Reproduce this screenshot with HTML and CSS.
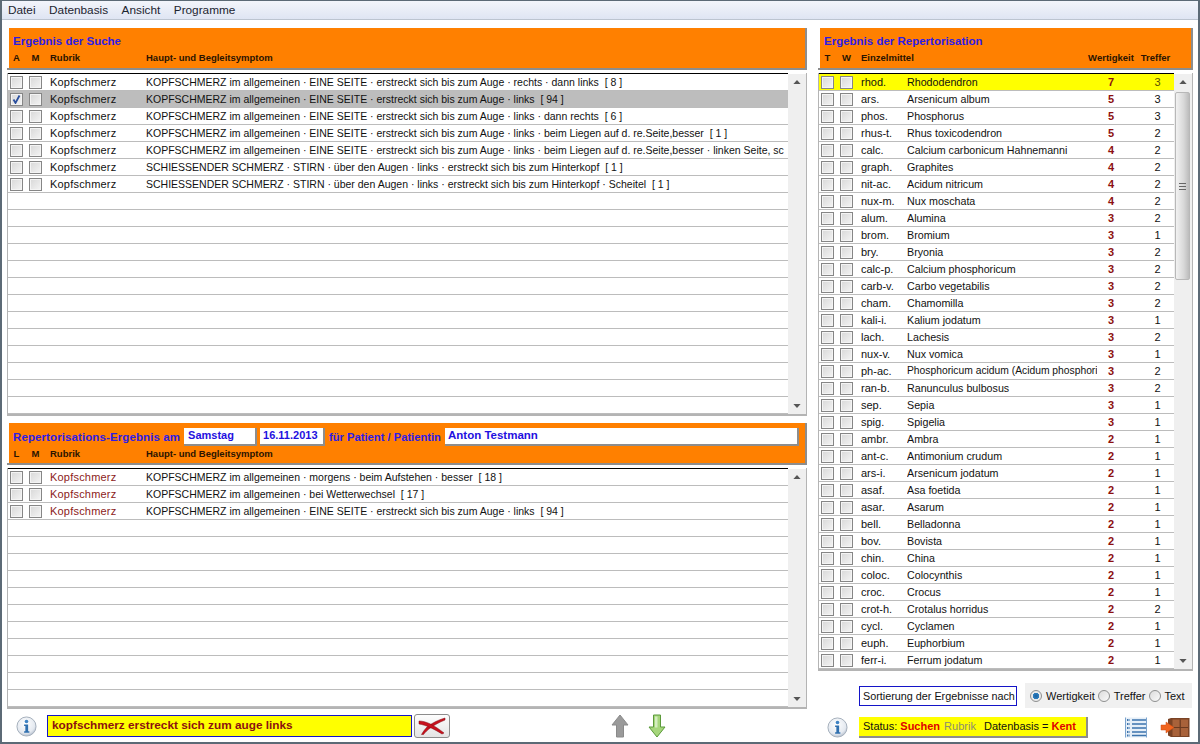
FILE: index.html
```html
<!DOCTYPE html>
<html lang="de">
  <head>
    <meta charset="UTF-8" />
    <title>Repertorisation</title>
    <link rel="stylesheet" href="styles.css">
  </head>
  <body>
    <div class="window">
      <div class="menubar">
        <span>Datei</span>
        <span>Datenbasis</span>
        <span>Ansicht</span>
        <span>Programme</span>
      </div>

      <div class="main">
        <div class="column-left">
          <div class="panel-header">
            <div class="panel-title">Ergebnis der Suche</div>
            <div class="head-row symptom-cols">
              <span class="c">A</span><span class="c">M</span><span>Rubrik</span><span>Haupt- und Begleitsymptom</span>
            </div>
          </div>
          <div class="list list-search">
            <div class="rows">
              <div class="row symptom-cols"><span class="cb"></span><span class="cb"></span><span class="rubric">Kopfschmerz</span><span class="clip">KOPFSCHMERZ im allgemeinen · EINE SEITE · erstreckt sich bis zum Auge · rechts · dann links&nbsp; [ 8 ]</span></div>
              <div class="row symptom-cols selected"><span class="cb">
                <svg width="11" height="11" viewBox="0 0 11 11"><path d="M2.5 5.5 L4.5 9 L8.5 1.5" fill="none" stroke="#2a4f9e" stroke-width="1.8"/></svg>
              </span><span class="cb"></span><span class="rubric">Kopfschmerz</span><span class="clip">KOPFSCHMERZ im allgemeinen · EINE SEITE · erstreckt sich bis zum Auge · links&nbsp; [ 94 ]</span></div>
              <div class="row symptom-cols"><span class="cb"></span><span class="cb"></span><span class="rubric">Kopfschmerz</span><span class="clip">KOPFSCHMERZ im allgemeinen · EINE SEITE · erstreckt sich bis zum Auge · links · dann rechts&nbsp; [ 6 ]</span></div>
              <div class="row symptom-cols"><span class="cb"></span><span class="cb"></span><span class="rubric">Kopfschmerz</span><span class="clip">KOPFSCHMERZ im allgemeinen · EINE SEITE · erstreckt sich bis zum Auge · links · beim Liegen auf d. re.Seite,besser&nbsp; [ 1 ]</span></div>
              <div class="row symptom-cols"><span class="cb"></span><span class="cb"></span><span class="rubric">Kopfschmerz</span><span class="clip">KOPFSCHMERZ im allgemeinen · EINE SEITE · erstreckt sich bis zum Auge · links · beim Liegen auf d. re.Seite,besser · linken Seite, sc</span></div>
              <div class="row symptom-cols"><span class="cb"></span><span class="cb"></span><span class="rubric">Kopfschmerz</span><span class="clip">SCHIESSENDER SCHMERZ · STIRN · über den Augen · links · erstreckt sich bis zum Hinterkopf&nbsp; [ 1 ]</span></div>
              <div class="row symptom-cols"><span class="cb"></span><span class="cb"></span><span class="rubric">Kopfschmerz</span><span class="clip">SCHIESSENDER SCHMERZ · STIRN · über den Augen · links · erstreckt sich bis zum Hinterkopf · Scheitel&nbsp; [ 1 ]</span></div>
            </div>
            <div class="scrollbar">
              <svg class="arrow" width="8" height="4" viewBox="0 0 9 5"><path d="M4.5 0 L9 5 H0 Z" fill="#555"/></svg>
              <svg class="arrow" width="8" height="4" viewBox="0 0 9 5"><path d="M0 0 H9 L4.5 5 Z" fill="#555"/></svg>
            </div>
          </div>

          <div class="panel-header panel-header-lower">
            <div class="title-line">
              <span class="panel-title panel-title-wide">Repertorisations-Ergebnis am</span>
              <span class="field field-day">Samstag</span>
              <span class="field field-date">16.11.2013</span>
              <span class="panel-title panel-title-patient">für Patient / Patientin</span>
              <span class="field field-name">Anton Testmann</span>
            </div>
            <div class="head-row symptom-cols">
              <span class="c">L</span><span class="c">M</span><span>Rubrik</span><span>Haupt- und Begleitsymptom</span>
            </div>
          </div>
          <div class="list list-result">
            <div class="rows">
              <div class="row symptom-cols"><span class="cb"></span><span class="cb"></span><span class="rubric rubric-red">Kopfschmerz</span><span class="clip">KOPFSCHMERZ im allgemeinen · morgens · beim Aufstehen · besser&nbsp; [ 18 ]</span></div>
              <div class="row symptom-cols"><span class="cb"></span><span class="cb"></span><span class="rubric rubric-red">Kopfschmerz</span><span class="clip">KOPFSCHMERZ im allgemeinen · bei Wetterwechsel&nbsp; [ 17 ]</span></div>
              <div class="row symptom-cols"><span class="cb"></span><span class="cb"></span><span class="rubric rubric-red">Kopfschmerz</span><span class="clip">KOPFSCHMERZ im allgemeinen · EINE SEITE · erstreckt sich bis zum Auge · links&nbsp; [ 94 ]</span></div>
            </div>
            <div class="scrollbar">
              <svg class="arrow" width="8" height="4" viewBox="0 0 9 5"><path d="M4.5 0 L9 5 H0 Z" fill="#555"/></svg>
              <svg class="arrow" width="8" height="4" viewBox="0 0 9 5"><path d="M0 0 H9 L4.5 5 Z" fill="#555"/></svg>
            </div>
          </div>

          <div class="toolbar toolbar-left">
            <svg class="icon-info" width="21" height="21" viewBox="0 0 22 22">
              <defs>
                <radialGradient id="infoBg" cx="45%" cy="35%" r="70%"><stop offset="0" stop-color="#fff"/><stop offset="0.7" stop-color="#e4e9f0"/><stop offset="1" stop-color="#a9b4c4"/></radialGradient>
              </defs>
              <circle cx="11" cy="11" r="10" fill="url(#infoBg)" stroke="#a3adba"/>
              <circle cx="11" cy="5.8" r="1.9" fill="#3f83c4"/>
              <path d="M8.5 9 H12.7 V16 H14 V17.5 H8.5 V16 H9.8 V10.5 H8.5 Z" fill="#2f6fae"/>
            </svg>
            <div class="search-input">kopfschmerz erstreckt sich zum auge links</div>
            <div class="cancel-btn">
              <svg width="28" height="18" viewBox="0 0 28 18">
                <path d="M27 1 C20 3 14 6 9 10 C7 12 5 15 3.5 17.5 L5.5 17.5 C9 13 15 8 27 3 Z" fill="#c8101c" stroke="#7e0b12" stroke-width="0.5"/>
                <path d="M1 4 C8 4 16 8 26 16 L24 17 C16 12 8 8 1 7 Z" fill="#c8101c" stroke="#7e0b12" stroke-width="0.5"/>
              </svg>
            </div>
            <div class="move-arrows">
              <svg width="18" height="24" viewBox="0 0 18 24"><path d="M9 1 L17 11 H12.5 V23 H5.5 V11 H1 Z" fill="#9a9a9a" stroke="#8a8a8a"/></svg>
              <svg width="18" height="24" viewBox="0 0 18 24"><path d="M5.5 1 H12.5 V13 H17 L9 23 L1 13 H5.5 Z" fill="#a6d67c" stroke="#5b9a3a"/><rect x="7" y="2.5" width="2.5" height="11" fill="#d4edc0"/></svg>
            </div>
          </div>
        </div>

        <div class="column-right">
          <div class="panel-header">
            <div class="panel-title">Ergebnis der Repertorisation</div>
            <div class="head-row remedy-cols">
              <span class="c">T</span><span class="c">W</span><span>Einzelmittel</span><span class="num">Wertigkeit</span><span class="num">Treffer</span>
            </div>
          </div>
          <div class="list list-remedies">
            <div class="rows">
              <div class="row remedy-cols highlight"><span class="cb"></span><span class="cb"></span><span>rhod.</span><span class="clip">Rhododendron</span><span class="num grade">7</span><span class="hits">3</span></div>
              <div class="row remedy-cols"><span class="cb"></span><span class="cb"></span><span>ars.</span><span class="clip">Arsenicum album</span><span class="num grade">5</span><span class="hits">3</span></div>
              <div class="row remedy-cols"><span class="cb"></span><span class="cb"></span><span>phos.</span><span class="clip">Phosphorus</span><span class="num grade">5</span><span class="hits">3</span></div>
              <div class="row remedy-cols"><span class="cb"></span><span class="cb"></span><span>rhus-t.</span><span class="clip">Rhus toxicodendron</span><span class="num grade">5</span><span class="hits">2</span></div>
              <div class="row remedy-cols"><span class="cb"></span><span class="cb"></span><span>calc.</span><span class="clip">Calcium carbonicum Hahnemanni</span><span class="num grade">4</span><span class="hits">2</span></div>
              <div class="row remedy-cols"><span class="cb"></span><span class="cb"></span><span>graph.</span><span class="clip">Graphites</span><span class="num grade">4</span><span class="hits">2</span></div>
              <div class="row remedy-cols"><span class="cb"></span><span class="cb"></span><span>nit-ac.</span><span class="clip">Acidum nitricum</span><span class="num grade">4</span><span class="hits">2</span></div>
              <div class="row remedy-cols"><span class="cb"></span><span class="cb"></span><span>nux-m.</span><span class="clip">Nux moschata</span><span class="num grade">4</span><span class="hits">2</span></div>
              <div class="row remedy-cols"><span class="cb"></span><span class="cb"></span><span>alum.</span><span class="clip">Alumina</span><span class="num grade">3</span><span class="hits">2</span></div>
              <div class="row remedy-cols"><span class="cb"></span><span class="cb"></span><span>brom.</span><span class="clip">Bromium</span><span class="num grade">3</span><span class="hits">1</span></div>
              <div class="row remedy-cols"><span class="cb"></span><span class="cb"></span><span>bry.</span><span class="clip">Bryonia</span><span class="num grade">3</span><span class="hits">2</span></div>
              <div class="row remedy-cols"><span class="cb"></span><span class="cb"></span><span>calc-p.</span><span class="clip">Calcium phosphoricum</span><span class="num grade">3</span><span class="hits">2</span></div>
              <div class="row remedy-cols"><span class="cb"></span><span class="cb"></span><span>carb-v.</span><span class="clip">Carbo vegetabilis</span><span class="num grade">3</span><span class="hits">2</span></div>
              <div class="row remedy-cols"><span class="cb"></span><span class="cb"></span><span>cham.</span><span class="clip">Chamomilla</span><span class="num grade">3</span><span class="hits">2</span></div>
              <div class="row remedy-cols"><span class="cb"></span><span class="cb"></span><span>kali-i.</span><span class="clip">Kalium jodatum</span><span class="num grade">3</span><span class="hits">1</span></div>
              <div class="row remedy-cols"><span class="cb"></span><span class="cb"></span><span>lach.</span><span class="clip">Lachesis</span><span class="num grade">3</span><span class="hits">2</span></div>
              <div class="row remedy-cols"><span class="cb"></span><span class="cb"></span><span>nux-v.</span><span class="clip">Nux vomica</span><span class="num grade">3</span><span class="hits">1</span></div>
              <div class="row remedy-cols"><span class="cb"></span><span class="cb"></span><span>ph-ac.</span><span class="clip clip-long">Phosphoricum acidum (Acidum phosphori</span><span class="num grade">3</span><span class="hits">2</span></div>
              <div class="row remedy-cols"><span class="cb"></span><span class="cb"></span><span>ran-b.</span><span class="clip">Ranunculus bulbosus</span><span class="num grade">3</span><span class="hits">2</span></div>
              <div class="row remedy-cols"><span class="cb"></span><span class="cb"></span><span>sep.</span><span class="clip">Sepia</span><span class="num grade">3</span><span class="hits">1</span></div>
              <div class="row remedy-cols"><span class="cb"></span><span class="cb"></span><span>spig.</span><span class="clip">Spigelia</span><span class="num grade">3</span><span class="hits">1</span></div>
              <div class="row remedy-cols"><span class="cb"></span><span class="cb"></span><span>ambr.</span><span class="clip">Ambra</span><span class="num grade">2</span><span class="hits">1</span></div>
              <div class="row remedy-cols"><span class="cb"></span><span class="cb"></span><span>ant-c.</span><span class="clip">Antimonium crudum</span><span class="num grade">2</span><span class="hits">1</span></div>
              <div class="row remedy-cols"><span class="cb"></span><span class="cb"></span><span>ars-i.</span><span class="clip">Arsenicum jodatum</span><span class="num grade">2</span><span class="hits">1</span></div>
              <div class="row remedy-cols"><span class="cb"></span><span class="cb"></span><span>asaf.</span><span class="clip">Asa foetida</span><span class="num grade">2</span><span class="hits">1</span></div>
              <div class="row remedy-cols"><span class="cb"></span><span class="cb"></span><span>asar.</span><span class="clip">Asarum</span><span class="num grade">2</span><span class="hits">1</span></div>
              <div class="row remedy-cols"><span class="cb"></span><span class="cb"></span><span>bell.</span><span class="clip">Belladonna</span><span class="num grade">2</span><span class="hits">1</span></div>
              <div class="row remedy-cols"><span class="cb"></span><span class="cb"></span><span>bov.</span><span class="clip">Bovista</span><span class="num grade">2</span><span class="hits">1</span></div>
              <div class="row remedy-cols"><span class="cb"></span><span class="cb"></span><span>chin.</span><span class="clip">China</span><span class="num grade">2</span><span class="hits">1</span></div>
              <div class="row remedy-cols"><span class="cb"></span><span class="cb"></span><span>coloc.</span><span class="clip">Colocynthis</span><span class="num grade">2</span><span class="hits">1</span></div>
              <div class="row remedy-cols"><span class="cb"></span><span class="cb"></span><span>croc.</span><span class="clip">Crocus</span><span class="num grade">2</span><span class="hits">1</span></div>
              <div class="row remedy-cols"><span class="cb"></span><span class="cb"></span><span>crot-h.</span><span class="clip">Crotalus horridus</span><span class="num grade">2</span><span class="hits">2</span></div>
              <div class="row remedy-cols"><span class="cb"></span><span class="cb"></span><span>cycl.</span><span class="clip">Cyclamen</span><span class="num grade">2</span><span class="hits">1</span></div>
              <div class="row remedy-cols"><span class="cb"></span><span class="cb"></span><span>euph.</span><span class="clip">Euphorbium</span><span class="num grade">2</span><span class="hits">1</span></div>
              <div class="row remedy-cols"><span class="cb"></span><span class="cb"></span><span>ferr-i.</span><span class="clip">Ferrum jodatum</span><span class="num grade">2</span><span class="hits">1</span></div>
            </div>
            <div class="scrollbar scrollbar-thumbed">
              <svg class="arrow" width="8" height="4" viewBox="0 0 9 5"><path d="M4.5 0 L9 5 H0 Z" fill="#555"/></svg>
              <div class="thumb"><span class="grip"></span></div>
              <svg class="arrow" width="8" height="4" viewBox="0 0 9 5"><path d="M0 0 H9 L4.5 5 Z" fill="#555"/></svg>
            </div>
          </div>

          <div class="sort-line">
            <div class="sort-label">Sortierung der Ergebnisse nach</div>
            <div class="radio-group">
              <span class="radio radio-on"></span><span class="radio-text">Wertigkeit</span>
              <span class="radio"></span><span class="radio-text">Treffer</span>
              <span class="radio"></span><span class="radio-text">Text</span>
            </div>
          </div>

          <div class="toolbar toolbar-right">
            <svg class="icon-info" width="21" height="21" viewBox="0 0 22 22">
              <circle cx="11" cy="11" r="10" fill="url(#infoBg)" stroke="#a3adba"/>
              <circle cx="11" cy="5.8" r="1.9" fill="#3f83c4"/>
              <path d="M8.5 9 H12.7 V16 H14 V17.5 H8.5 V16 H9.8 V10.5 H8.5 Z" fill="#2f6fae"/>
            </svg>
            <div class="status-box">
              Status: <b class="red">Suchen</b> <span class="grey">Rubrik</span> <span class="db-label">Datenbasis = <b class="red">Kent</b></span>
            </div>
            <svg class="icon-list" width="22" height="21" viewBox="0 0 22 21">
              <rect x="0.5" y="0.5" width="21" height="20" fill="#e6eff8"/>
              <path d="M0.5 0.5 V20.5 M21.5 0.5 V20.5" stroke="#7ba3cd"/>
              <path d="M7 3 H21 M7 7 H21 M7 11 H21 M7 15 H21 M7 18.5 H21" stroke="#3d74ad" stroke-width="1.5"/>
              <path d="M2 3 H5 M2 7 H5 M2 11 H5 M2 15 H5 M2 18.5 H5" stroke="#3d74ad" stroke-width="2" stroke-dasharray="1.5 1"/>
            </svg>
            <svg class="icon-door" width="30" height="21" viewBox="0 0 30 21">
              <path d="M8 2 L11 1 H29.5 V20 H11 L8 18.5 Z" fill="#7a4325"/>
              <rect x="12.5" y="2.5" width="15.5" height="16.5" fill="#a8623a"/>
              <path d="M20.2 2.5 V19 M12.5 10.5 H28" stroke="#6a3a20" stroke-width="1.2"/>
              <path d="M1 8 H6 V5 L14 10.5 L6 16 V13 H1 Z" fill="#f0641e" stroke="#d04a10" stroke-width="0.5"/>
            </svg>
          </div>
        </div>
      </div>
    </div>
  </body>
</html>
```

FILE: styles.css
```css
html, body {
  margin: 0;
  padding: 0;
  background-color: white;
}

body {
  width: 1200px;
  height: 744px;
  overflow: hidden;
  font-family: "Liberation Sans", Arial, sans-serif;
  font-size: 11px;
  color: #111;
}

.window {
  box-sizing: border-box;
  width: 1200px;
  height: 744px;
  border: 1px solid #5c6a76;
  border-width: 1px 2px 2px 2px;
  display: flex;
  flex-direction: column;
}

.menubar {
  height: 18px;
  display: flex;
  align-items: center;
  gap: 13.5px;
  padding-left: 6px;
  font-size: 11.8px;
  color: #1c2430;
  background: linear-gradient(#f3f5fb, #dfe5f3);
  border-bottom: 1px solid #bcc4d0;
}

.main {
  display: flex;
  gap: 11px;
  padding: 8px 5px 0 5px;
  flex: 1;
}

.column-left {
  width: 800px;
  display: flex;
  flex-direction: column;
}

.column-right {
  width: 375px;
  display: flex;
  flex-direction: column;
}

/* orange headers */
.panel-header {
  box-sizing: border-box;
  height: 42px;
  padding: 5px 0 0 6px;
  background: linear-gradient(#ff8000, #ff8000) no-repeat 2px 0 / calc(100% - 2px) 100%;
  border-right: 2px solid #8d8d8d;
  border-bottom: 2px solid #8d8d8d;
}

.panel-title {
  font-size: 11.5px;
  font-weight: bold;
  line-height: 16px;
  color: #2d1ce6;
}

.panel-title-wide {
  letter-spacing: 0.1px;
}

.panel-title-patient {
  margin-left: 4px;
  font-size: 11.2px;
}

.head-row {
  margin-left: -5px;
  margin-top: 3px;
  font-size: 9.5px;
  font-weight: bold;
  line-height: 12px;
  color: #2b1400;
}

.head-row .c {
  width: 13px;
  text-align: center;
}

.panel-header-lower {
  margin-top: 7px;
  padding-top: 4px;
}

.title-line {
  display: flex;
  align-items: center;
  height: 19px;
}

.field {
  box-sizing: border-box;
  height: 18px;
  line-height: 14px;
  padding-left: 4px;
  font-size: 11px;
  font-weight: bold;
  color: #1f10e0;
  background: white;
  border-right: 2px solid #8d8d8d;
  border-bottom: 2px solid #8d8d8d;
}

.field-day {
  width: 73px;
  margin-left: 4px;
}

.field-date {
  width: 65px;
  margin-left: 3px;
  padding-left: 3px;
}

.field-name {
  width: 354px;
  margin-left: auto;
  margin-right: 6px;
  padding-left: 3px;
  font-size: 11.5px;
}

.panel-header-lower .head-row {
  margin-top: 2px;
}

/* lists */
.list {
  display: flex;
  box-sizing: border-box;
  margin-top: 3px;
  border: 1px solid #b4b4b4;
  border-top: none;
  border-bottom-width: 2px;
  background: white;
}

.list-search {
  height: 343px;
}

.list-result {
  height: 241px;
}

.list-remedies {
  height: 598px;
}

.rows {
  flex: 1;
  min-width: 0;
  border-top: 1px solid black;
  background: repeating-linear-gradient(white 0, white 16px, #bcbcbc 16px, #bcbcbc 17px);
}

.row {
  height: 17px;
  box-sizing: border-box;
  border-bottom: 1px solid #bcbcbc;
  line-height: 16px;
  background: white;
}

.symptom-cols {
  display: grid;
  grid-template-columns: 19px 21px 96px 1fr;
  padding-left: 2px;
}

.symptom-cols .clip {
  font-size: 10.5px;
}

.remedy-cols {
  display: grid;
  grid-template-columns: 19px 21px 46px 190px 28px 49px;
  padding-left: 2px;
}

.remedy-cols .clip {
  font-size: 10.7px;
}

.remedy-cols .clip-long {
  font-size: 10.3px;
}

.head-row.remedy-cols {
  grid-template-columns: 19px 21px 226px 48px 41px;
}

.clip {
  overflow: hidden;
  white-space: nowrap;
}

.num {
  text-align: center;
}

.hits {
  padding-left: 16px;
  width: 33px;
  text-align: center;
}

.grade {
  font-weight: bold;
  color: #8c1010;
}

.rubric {
  letter-spacing: 0.2px;
}

.rubric-red {
  color: #8c1a1a;
}

.selected {
  background: #bdbdbd;
}

.highlight {
  background: #ffff00;
}

.highlight .hits {
  color: #5a5000;
}

.cb {
  box-sizing: border-box;
  width: 13px;
  height: 13px;
  margin-top: 2px;
  border: 1px solid #868686;
  background: linear-gradient(135deg, #d8d8d8, #f4f4f4);
  outline: 1px solid #f4f4f4;
  outline-offset: -2px;
  display: block;
}

.cb svg {
  display: block;
}

/* scrollbar */
.scrollbar {
  width: 18px;
  flex: none;
  margin-top: 1px;
  background: #efefef;
  display: flex;
  flex-direction: column;
  justify-content: space-between;
  align-items: center;
  padding: 6px 0;
  box-sizing: border-box;
}

.arrow {
  display: block;
  flex: none;
}

.scrollbar-thumbed {
  position: relative;
}

.thumb {
  position: absolute;
  left: 1px;
  top: 18px;
  width: 15px;
  height: 188px;
  box-sizing: border-box;
  border: 1px solid #b8b8b8;
  border-radius: 2px;
  background: linear-gradient(90deg, #f2f2f2, #d8d8d8 60%, #bcbcbc);
  display: flex;
  align-items: center;
  justify-content: center;
}

.grip {
  width: 7px;
  height: 7px;
  background: repeating-linear-gradient(#666 0, #666 1px, transparent 1px, transparent 3px);
}

/* bottom bars */
.toolbar {
  display: flex;
  align-items: center;
  height: 30px;
  padding-top: 2px;
}

.icon-info {
  margin-left: 9px;
  flex: none;
}

.search-input {
  box-sizing: border-box;
  width: 365px;
  height: 22px;
  margin-left: 10px;
  padding-left: 4px;
  line-height: 19px;
  font-size: 11.8px;
  font-weight: bold;
  color: #8c1010;
  background: #ffff00;
  border: 1px solid #1414c8;
}

.cancel-btn {
  box-sizing: border-box;
  width: 36px;
  height: 24px;
  margin-left: 2px;
  border: 1px solid #8c8c8c;
  border-radius: 3px;
  background: linear-gradient(#fdfdfd, #e4e4e4);
  display: flex;
  align-items: center;
  justify-content: center;
}

.move-arrows {
  display: flex;
  gap: 19px;
  margin-left: 161px;
}

.sort-line {
  box-sizing: border-box;
  display: flex;
  align-items: center;
  height: 39px;
  padding-top: 10px;
}

.sort-label {
  box-sizing: border-box;
  width: 158px;
  height: 20px;
  margin-left: 41px;
  padding-left: 3px;
  line-height: 18px;
  font-size: 10.8px;
  white-space: nowrap;
  border: 1px solid #1414c8;
}

.radio-group {
  display: flex;
  align-items: center;
  width: 167px;
  height: 25px;
  margin-left: 8px;
  padding-left: 5px;
  box-sizing: border-box;
  background: #f0f0f0;
}

.radio {
  box-sizing: border-box;
  width: 12px;
  height: 12px;
  border-radius: 50%;
  border: 1px solid #8e8f8f;
  background: linear-gradient(135deg, #dcdcdc, #fafafa);
  flex: none;
}

.radio-on {
  background: radial-gradient(circle, #1c5f9e 0, #2f80c0 3px, #eaeaea 3.5px);
}

.radio-text {
  margin: 0 3px 0 4px;
}

.status-box {
  box-sizing: border-box;
  width: 229px;
  height: 21px;
  margin-left: 11px;
  padding-left: 4px;
  line-height: 19px;
  white-space: nowrap;
  background: #ffff00;
  border-right: 2px solid #8d8d8d;
  border-bottom: 2px solid #8d8d8d;
}

.red {
  color: #e00000;
}

.grey {
  color: #8c8c70;
  margin-left: 1px;
}

.db-label {
  margin-left: 5px;
}

.icon-list {
  margin-left: 37px;
  flex: none;
}

.icon-door {
  margin-left: 13px;
  flex: none;
}
```
